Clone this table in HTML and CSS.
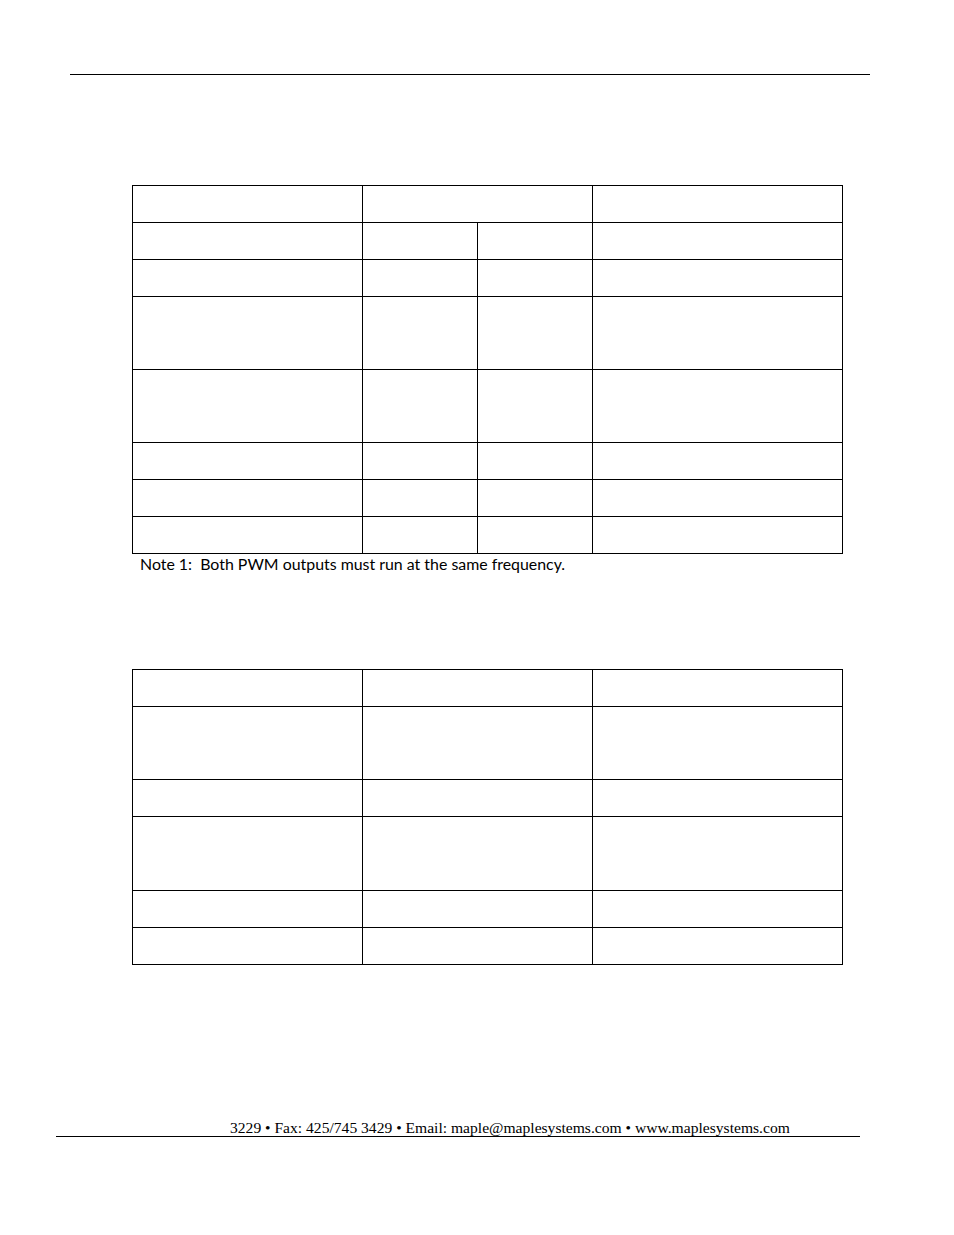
FILE: index.html
```html
<!DOCTYPE html>
<html>
<head>
<meta charset="utf-8">
<link rel="stylesheet" href="styles.css">
</head>
<body>
<div class="page">
  <div class="header-rule"></div>

  <div class="grid grid-a">
    <div class="cell"></div>
    <div class="cell span2"></div>
    <div class="cell"></div>

    <div class="cell"></div><div class="cell"></div><div class="cell"></div><div class="cell"></div>
    <div class="cell"></div><div class="cell"></div><div class="cell"></div><div class="cell"></div>
    <div class="cell"></div><div class="cell"></div><div class="cell"></div><div class="cell"></div>
    <div class="cell"></div><div class="cell"></div><div class="cell"></div><div class="cell"></div>
    <div class="cell"></div><div class="cell"></div><div class="cell"></div><div class="cell"></div>
    <div class="cell"></div><div class="cell"></div><div class="cell"></div><div class="cell"></div>
    <div class="cell"></div><div class="cell"></div><div class="cell"></div><div class="cell"></div>
  </div>

  <div class="note-block">
    <p class="note">Note 1:  Both PWM outputs must run at the same frequency.</p>
  </div>

  <div class="grid grid-b">
    <div class="cell"></div><div class="cell"></div><div class="cell"></div>
    <div class="cell"></div><div class="cell"></div><div class="cell"></div>
    <div class="cell"></div><div class="cell"></div><div class="cell"></div>
    <div class="cell"></div><div class="cell"></div><div class="cell"></div>
    <div class="cell"></div><div class="cell"></div><div class="cell"></div>
    <div class="cell"></div><div class="cell"></div><div class="cell"></div>
  </div>

  <div class="footer">
    <span class="footer-text">3229 • Fax: 425/745 3429 • Email: maple@maplesystems.com • www.maplesystems.com</span>
  </div>
</div>
</body>
</html>
```

FILE: styles.css
```css
html, body {
  margin: 0;
  padding: 0;
  background: #ffffff;
}

.page {
  width: 954px;
  height: 1235px;
  overflow: hidden;
  background: #ffffff;
}

.header-rule {
  margin: 74px 0 0 70px;
  width: 800px;
  height: 0;
  border-top: 1px solid #000;
}

.grid {
  display: grid;
  margin-left: 132px;
  width: 711px;
  box-sizing: border-box;
  border-top: 1px solid #000;
  border-left: 1px solid #000;
}

.grid-a {
  margin-top: 110px;
  grid-template-columns: 230px 115px 115px 250px;
  grid-template-rows: 37px 37px 37px 73px 73px 37px 37px 37px;
}

.grid-b {
  grid-template-columns: 230px 230px 250px;
  grid-template-rows: 37px 73px 37px 74px 37px 37px;
}

.cell {
  box-sizing: border-box;
  border-right: 1px solid #000;
  border-bottom: 1px solid #000;
}

.span2 {
  grid-column: span 2;
}

.note-block {
  height: 115px;
  margin-left: 140px;
}

.note {
  margin: 0;
  padding-top: 1px;
  font-family: Lato, "Liberation Sans", sans-serif;
  font-size: 15.9px;
  line-height: 18px;
  color: #000;
  white-space: pre;
}

.footer {
  margin: 154px 0 0 56px;
  width: 804px;
  height: 18px;
  box-sizing: border-box;
  border-bottom: 1px solid #000;
  padding-left: 174px;
}

.footer-text {
  display: block;
  font-family: "Liberation Serif", "Times New Roman", serif;
  font-size: 15.6px;
  line-height: 17px;
  color: #000;
  white-space: pre;
}
```
